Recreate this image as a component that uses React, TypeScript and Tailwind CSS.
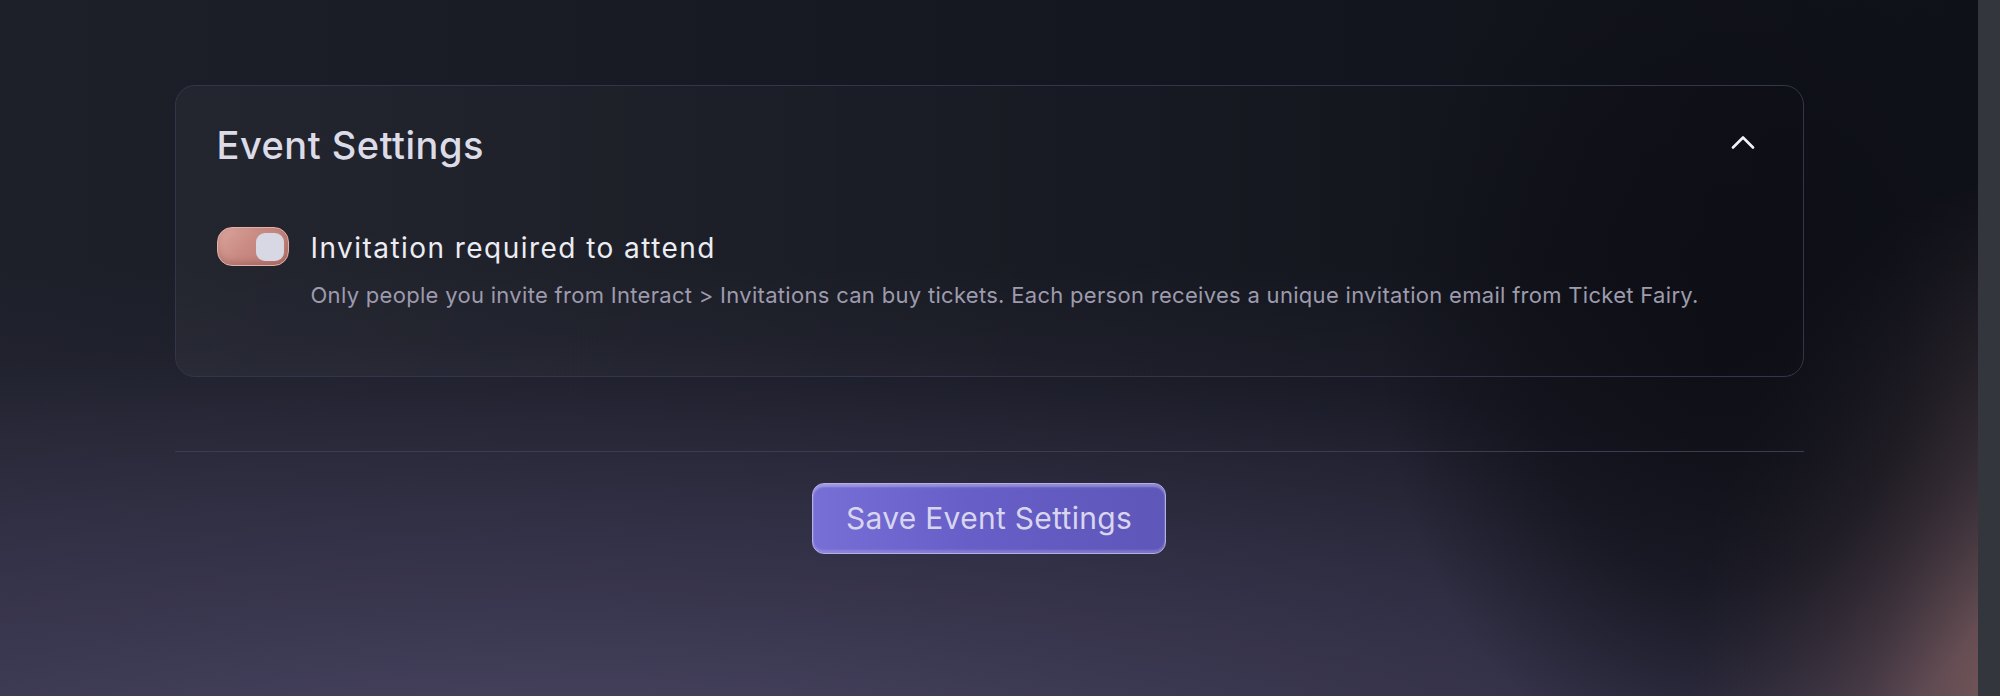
import React from "react";

function ChevronUp() {
  return (
    <svg width="24" height="14" viewBox="0 0 24 14" fill="none">
      <path d="M2 12.5 L12 2.5 L22 12.5" stroke="#f1f1f6" strokeWidth="2.6" strokeLinecap="round" strokeLinejoin="round" />
    </svg>
  );
}

export default function App() {
  return (
    <div className="flex h-[696px] w-full overflow-hidden font-['Inter',sans-serif]">
      <main className="relative flex-1 bg-[radial-gradient(ellipse_340px_440px_at_1720px_340px,rgba(13,14,21,0.9)_0%,rgba(13,14,21,0.6)_55%,transparent_100%),radial-gradient(ellipse_320px_540px_at_2010px_720px,rgba(125,92,92,0.95)_0%,rgba(105,80,86,0.55)_45%,transparent_100%),radial-gradient(ellipse_1900px_480px_at_550px_820px,#4f4a68_0%,rgba(64,60,88,0.7)_45%,transparent_100%),linear-gradient(to_bottom,transparent_38%,rgba(58,55,80,0.55)_100%),linear-gradient(to_right,#1d1f29,#151720_55%,#0f1119)]">
        <div className="mx-auto w-[1629px] pt-[85px]">
          <section className="rounded-[20px] border border-[#34354a] bg-[linear-gradient(to_right,rgba(255,255,255,0.035),rgba(255,255,255,0.01)_60%,rgba(0,0,0,0.05))] pl-[41px] pr-[48px] pt-[36px] pb-[67px]">
            <div className="flex items-center justify-between">
              <h2 className="text-[38px] font-medium leading-[46px] tracking-[0.5px] text-[#dcdbe8]">Event Settings</h2>
              <button className="-mt-[6px] flex items-center">
                <ChevronUp />
              </button>
            </div>
            <div className="mt-[59px] flex items-start">
              <div className="relative h-[39px] w-[72px] shrink-0 rounded-[15px] border-[1.5px] border-[#e3b0a8] bg-[linear-gradient(135deg,#dba69e_0%,#c88a82_45%,#b87870_100%)] shadow-[inset_0_-3px_6px_rgba(90,40,40,0.25)]">
                <div className="absolute right-[4px] top-[5px] h-[28px] w-[28px] rounded-[9px] bg-[#d8d7e4]" />
              </div>
              <div className="ml-[22px] flex flex-col">
                <div className="mt-[4px] text-[28px] leading-[34px] tracking-[1.45px] text-[#ececf3]">Invitation required to attend</div>
                <div className="mt-[16px] text-[22px] leading-[28px] tracking-[0.3px] text-[#9d9bad]">
                  Only people you invite from Interact &gt; Invitations can buy tickets. Each person receives a unique invitation email from Ticket Fairy.
                </div>
              </div>
            </div>
          </section>
          <div className="mt-[74px] h-px bg-[#3e3b50]" />
          <div className="mt-[31px] flex justify-center">
            <button className="flex h-[71px] w-[354px] items-center justify-center rounded-[12px] border border-[#b4aeea] bg-[linear-gradient(to_right,#776ed6,#675ec8_45%,#5e56b8)] text-[30px] font-normal tracking-[0.3px] text-[#d8d5ee] shadow-[inset_0_3px_2px_rgba(255,255,255,0.3),inset_0_-3px_2px_rgba(255,255,255,0.18)]">
              Save Event Settings
            </button>
          </div>
        </div>
      </main>
      <div className="w-[22px] shrink-0 bg-[#34363e]" />
    </div>
  );
}
